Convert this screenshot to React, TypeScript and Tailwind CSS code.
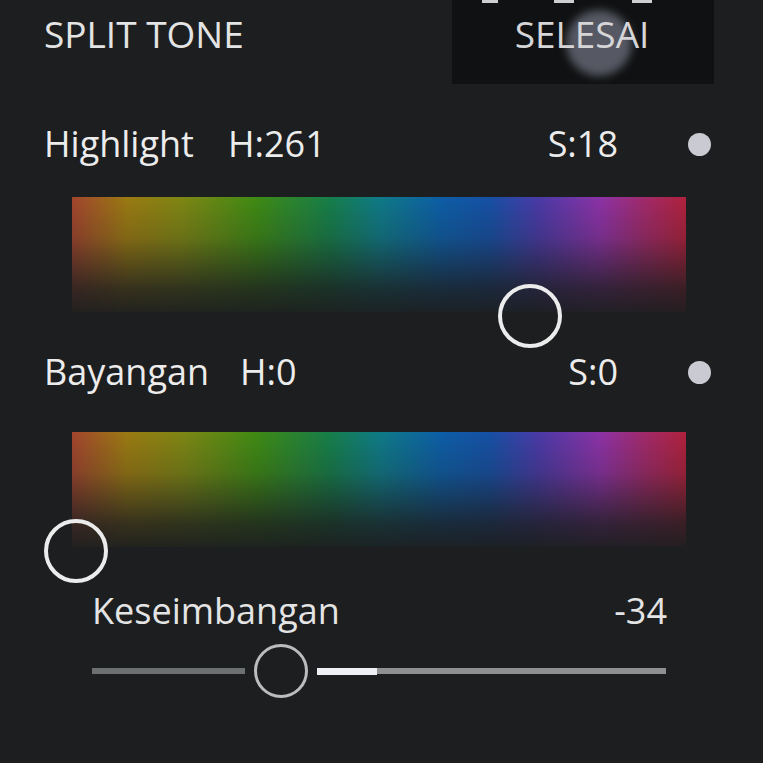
import React from 'react';

const hue =
  'linear-gradient(to right, #a3452e 0%, #9a7a12 9%, #7e8614 18%, #3f8a14 30%, #167e4a 42%, #0f7a86 50%, #0d5ea6 60%, #1650a4 68%, #4a3aa6 76%, #8c32a6 86%, #a02a6c 93%, #b0213c 100%)';
const fade = 'linear-gradient(to bottom, rgba(28,30,31,0) 0%, rgba(28,30,31,0.2) 35%, rgba(28,30,31,0.8) 80%, rgba(28,30,31,0.95) 100%)';

function HueBox({ thumbX }: { thumbX: number }) {
  return (
    <div className="relative ml-[72px] w-[614px] h-[115px]">
      <div className="absolute inset-0" style={{ backgroundImage: hue }} />
      <div className="absolute inset-0" style={{ backgroundImage: fade }} />
      <div
        className="absolute w-[64px] h-[64px] rounded-full border-[4px] border-[#ececec] bottom-[-36px]"
        style={{ left: thumbX - 32 }}
      />
    </div>
  );
}

function ToneRow({ label, h, s, hLeft }: { label: string; h: string; s: string; hLeft: number }) {
  return (
    <div className="flex items-center h-[44px] pl-[44px] pr-[52px] text-[#ececec] text-[36px]">
      <span style={{ width: hLeft - 44 }}>{label}</span>
      <span>{h}</span>
      <span className="ml-auto mr-[70px]">{s}</span>
      <span className="w-[23px] h-[23px] rounded-full bg-[#c9cad2]" />
    </div>
  );
}

export default function App() {
  return (
    <div
      className="w-[763px] h-[763px] bg-[#1c1e1f] overflow-hidden flex flex-col"
      style={{ fontFamily: '"Open Sans", "Lato", sans-serif' }}
    >
      {/* header */}
      <div className="flex h-[84px]">
        <div className="pl-[44px] pt-[6px] text-[37px] text-[#e4e4e4]">SPLIT TONE</div>
        <div className="relative ml-auto mr-[49px] w-[262px] h-[84px] bg-[#0f1112] flex justify-center">
          <div className="absolute top-0 left-[30px] w-[16px] h-[3px] bg-[#cfcfcf]" />
          <div className="absolute top-0 left-[102px] w-[20px] h-[3px] bg-[#cfcfcf]" />
          <div className="absolute top-0 left-[180px] w-[20px] h-[3px] bg-[#cfcfcf]" />
          <div className="absolute left-[114px] top-[10px] w-[66px] h-[66px] rounded-full bg-[#5e606c] blur-[4px] opacity-90" />
          <span className="relative pt-[6px] pr-[2px] text-[37px] text-[#d6d6d8]">SELESAI</span>
        </div>
      </div>

      <div className="h-[38px]" />
      <ToneRow label="Highlight" h="H:261" s="S:18" hLeft={228} />
      <div className="h-[31px]" />
      <HueBox thumbX={458} />

      <div className="h-[38px]" />
      <ToneRow label="Bayangan" h="H:0" s="S:0" hLeft={240} />
      <div className="h-[38px]" />
      <HueBox thumbX={4} />

      {/* balance */}
      <div className="flex items-center h-[44px] mt-[42px] pl-[92px] pr-[96px] text-[#e4e4e4] text-[36px]">
        <span>Keseimbangan</span>
        <span className="ml-auto">-34</span>
      </div>
      <div className="flex items-center h-[56px] mt-[10px] pl-[92px] pr-[97px]">
        <div className="w-[153px] h-[6px] bg-[#6c7070]" />
        <div className="mx-[9px] w-[54px] h-[54px] rounded-full border-[3px] border-[#bcbcbc]" />
        <div className="w-[60px] h-[7px] bg-[#eef0f6]" />
        <div className="flex-1 h-[6px] bg-[#8e9092]" />
      </div>
    </div>
  );
}
